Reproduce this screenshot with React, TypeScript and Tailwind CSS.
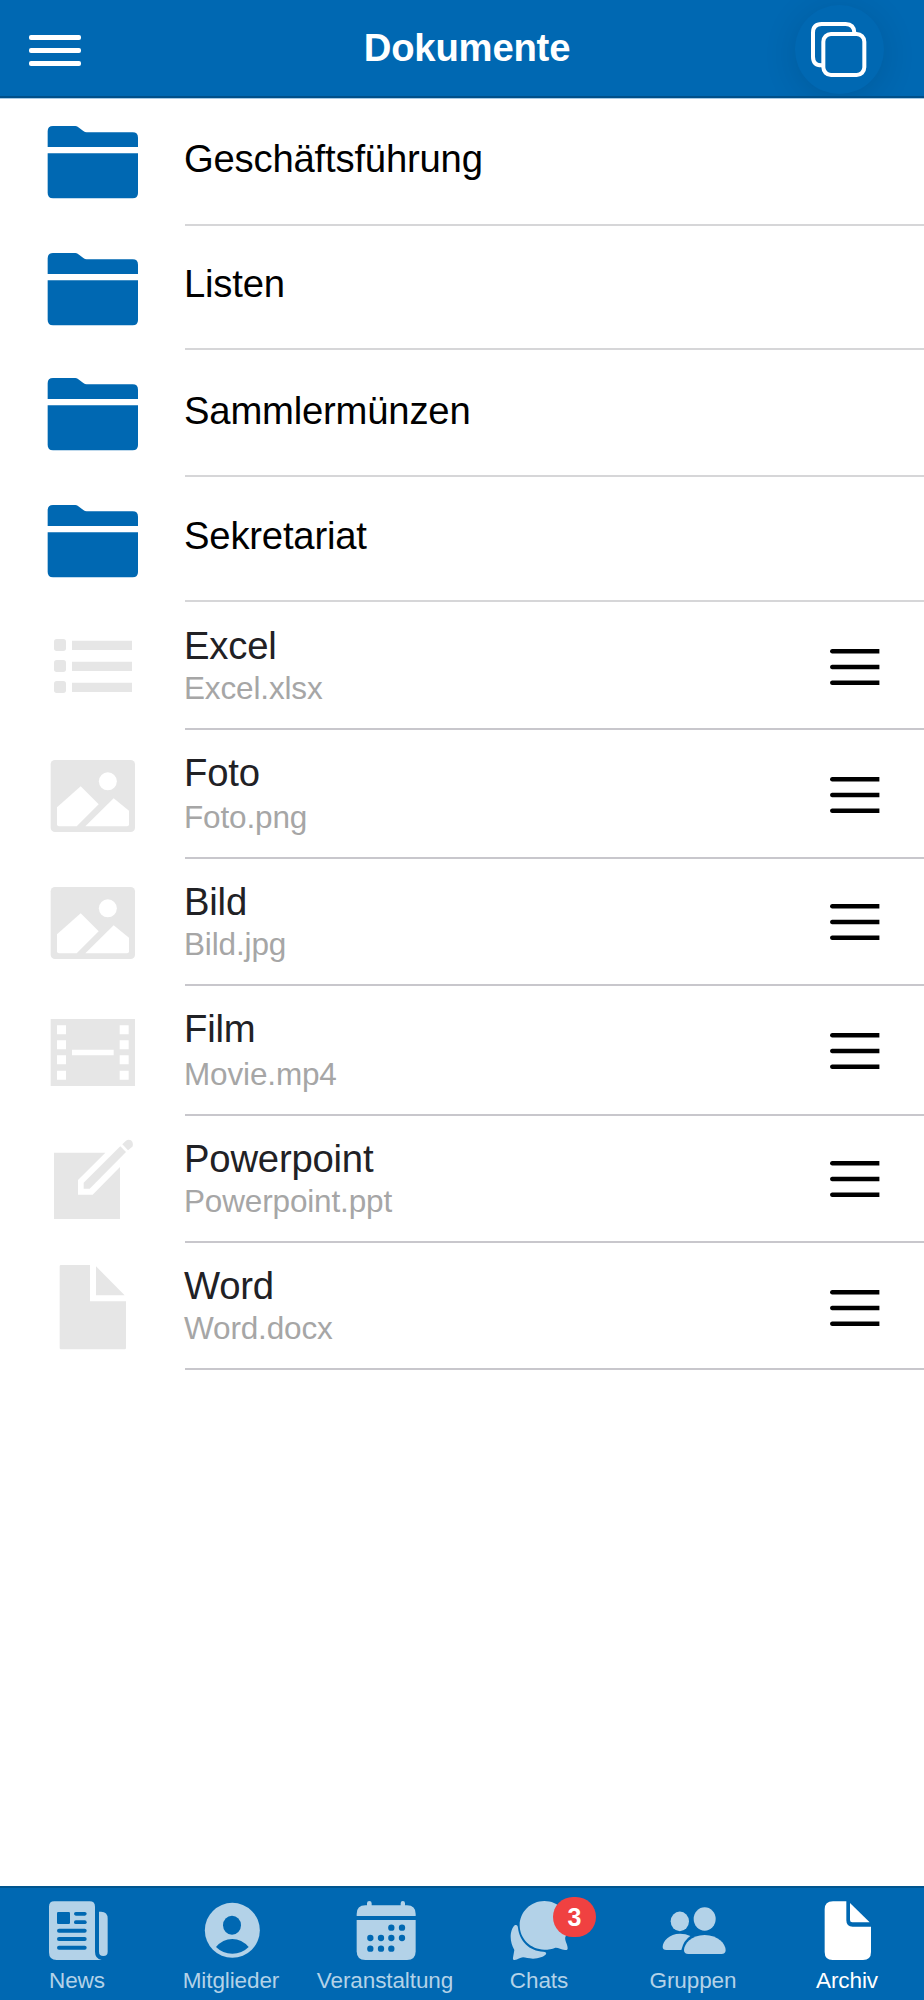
import type { ReactNode } from 'react';

type Folder = { name: string; row: string; icon: string; text: string };
type Doc = { name: string; file: string; row: string; icon: ReactNode; iconTop: string; text: string; gap: string; handle: string };

const FolderIcon = () => (
    <svg className="w-[91px] h-[73px] text-[#0068b2]" viewBox="141 377 273 219" fill="currentColor">
        <path d="M143 440v-47q0-16 16-16h67q4 0 7 2l17 13q5 4 10 4h138q16 0 16 16v28z" />
        <path d="M143 459h271v119q0 16-16 16H159q-16 0-16-16z" />
    </svg>
);

const ListIcon = () => (
    <svg className="w-[91px] h-[54px]" viewBox="141 117 273 162" fill="currentColor">
        <rect x="162" y="117" width="36" height="36" rx="8" />
        <rect x="162" y="180" width="36" height="36" rx="8" />
        <rect x="162" y="243" width="36" height="36" rx="8" />
        <path d="M216 122h180v28H216zM216 185h180v28H216zM216 248h180v28H216z" />
    </svg>
);

const ImageIcon = () => (
    <svg className="w-[91px] h-[73px]" viewBox="141 479 273 219" fill="currentColor">
        <rect x="152" y="479" width="253" height="216" rx="13" />
        <g fill="#fff">
            <circle cx="323.500" cy="543" r="27" />
            <path d="M171 621l71-63 54 54-66 66h-53q-6 0-6-6z" />
            <path d="M256 678l85-84 46 37v41q0 6-6 6z" />
        </g>
    </svg>
);

const FilmIcon = () => (
    <svg className="w-[91px] h-[67px]" viewBox="141 447 273 201" fill="currentColor">
        <path d="M152 447h253v201H152z" />
        <g fill="#fff">
            <path d="M171 466h27v27h-27zM171 511h27v27h-27zM171 556h27v27h-27zM171 602h27v27h-27z" />
            <path d="M359 466h27v27h-27zM359 511h27v27h-27zM359 556h27v27h-27zM359 602h27v27h-27z" />
            <path d="M216 539h125v17H216z" />
        </g>
    </svg>
);

const CreateIcon = () => (
    <svg className="w-[91px] h-[81px]" viewBox="141 57 273 243" fill="currentColor">
        <path d="M162 98h154l-82 82v44h44l82-83v156H162z" />
        <path d="M251 188l110-109 17 17-109 110h-18z" />
        <path d="M367 73l10-10q8-7 16-2 9 8 4 19l-13 11z" />
    </svg>
);

const DocumentIcon = () => (
    <svg className="w-[91px] h-[85px]" viewBox="141 434 273 255" fill="currentColor">
        <path d="M183 434h87v109h108v140q0 4-4 4H183q-4 0-4-4V438q0-4 4-4z" />
        <path d="M288 438l86 87h-86z" />
    </svg>
);

const HandleIcon = () => (
    <svg className="w-[50px] h-[36px] text-black" viewBox="0 0 50 36" fill="currentColor">
        <path d="M2 0h47.400v4.500H2q-2-.5-2-2.250T2 0z" />
        <path d="M2 15.700h47.400v4.500H2q-2-.5-2-2.250t2-2.250z" />
        <path d="M2 31.400h47.400v4.500H2q-2-.5-2-2.250t2-2.250z" />
    </svg>
);

const folders: Folder[] = [
    { name: 'Geschäftsführung', row: 'h-[128px]', icon: 'pt-[28px]', text: 'pt-[39px]' },
    { name: 'Listen', row: 'h-[124px]', icon: 'pt-[27px]', text: 'pt-[36px]' },
    { name: 'Sammlermünzen', row: 'h-[127px]', icon: 'pt-[28px]', text: 'pt-[39px]' },
    { name: 'Sekretariat', row: 'h-[125px]', icon: 'pt-[28px]', text: 'pt-[37px]' },
];

const docs: Doc[] = [
    { name: 'Excel', file: 'Excel.xlsx', row: 'h-[128px]', icon: <ListIcon />, iconTop: 'pt-[37px]', text: 'pt-[22px]', gap: 'mt-[2px]', handle: 'pt-[47px]' },
    { name: 'Foto', file: 'Foto.png', row: 'h-[129px]', icon: <ImageIcon />, iconTop: 'pt-[30px]', text: 'pt-[21px]', gap: 'mt-[4px]', handle: 'pt-[47px]' },
    { name: 'Bild', file: 'Bild.jpg', row: 'h-[127px]', icon: <ImageIcon />, iconTop: 'pt-[28px]', text: 'pt-[21px]', gap: 'mt-[2px]', handle: 'pt-[45px]' },
    { name: 'Film', file: 'Movie.mp4', row: 'h-[130px]', icon: <FilmIcon />, iconTop: 'pt-[33px]', text: 'pt-[21px]', gap: 'mt-[5px]', handle: 'pt-[47px]' },
    { name: 'Powerpoint', file: 'Powerpoint.ppt', row: 'h-[127px]', icon: <CreateIcon />, iconTop: 'pt-[23px]', text: 'pt-[21px]', gap: 'mt-[2px]', handle: 'pt-[45px]' },
    { name: 'Word', file: 'Word.docx', row: 'h-[127px]', icon: <DocumentIcon />, iconTop: 'pt-[22px]', text: 'pt-[21px]', gap: 'mt-[2px]', handle: 'pt-[47px]' },
];

const tabs = [
    {
        label: 'News',
        icon: (
            <svg className="w-[68px] h-[62px]" viewBox="129 87 204 186" fill="currentColor">
                <path d="M163 94h106q16 0 16 16v135q0 21 20 25H170q-23 0-23-23V110q0-16 16-16z" />
                <path d="M297 125h6q20 1 20 20v100q0 13-13 13t-13-13z" />
                <g fill="#0068b2">
                    <rect x="171" y="126" width="39" height="36" rx="4" />
                    <rect x="222" y="126" width="38" height="11" rx="5.500" />
                    <rect x="222" y="151" width="38" height="11" rx="5.500" />
                    <rect x="171" y="176" width="89" height="12" rx="6" />
                    <rect x="171" y="201" width="89" height="12" rx="6" />
                    <rect x="171" y="227" width="89" height="12" rx="6" />
                </g>
            </svg>
        ),
    },
    {
        label: 'Mitglieder',
        icon: (
            <svg className="w-[68px] h-[62px]" viewBox="591 87 204 186" fill="currentColor">
                <circle cx="697" cy="181" r="82.500" />
                <g fill="#0068b2">
                    <ellipse cx="696" cy="166" rx="27" ry="28.500" />
                    <path d="M648 231q20-24 49-24 28 0 49 24-20 20-49 20t-49-20z" />
                </g>
            </svg>
        ),
    },
    {
        label: 'Veranstaltung',
        icon: (
            <svg className="w-[68px] h-[62px]" viewBox="1053 87 204 186" fill="currentColor">
                <path d="M1070 138v-6q0-26 26-26h5v-6q0-7 7-7t7 7v6h87v-6q0-7 6.500-7t6.500 7v6h6q26 0 26 26v6z" />
                <path d="M1070 150h177v94q0 26-26 26h-125q-26 0-26-26z" />
                <g fill="#0068b2">
                    <circle cx="1174" cy="173" r="9.500" />
                    <circle cx="1206" cy="173" r="9.500" />
                    <circle cx="1111" cy="204" r="9.500" />
                    <circle cx="1143" cy="204" r="9.500" />
                    <circle cx="1174" cy="204" r="9.500" />
                    <circle cx="1206" cy="204" r="9.500" />
                    <circle cx="1111" cy="236" r="9.500" />
                    <circle cx="1143" cy="236" r="9.500" />
                    <circle cx="1174" cy="236" r="9.500" />
                </g>
            </svg>
        ),
    },
    {
        label: 'Chats',
        badge: 3,
        icon: (
            <svg className="w-[68px] h-[62px]" viewBox="129 87 204 186" fill="currentColor">
                <path d="M247 93c41 0 74 33 74 73 0 13-5 26-11 35-3 10 7 22 7 34 0 5-4 6-8 5-12-2-21-8-29-7-10 4-21 6-33 6-41 0-74-33-74-73s33-73 74-73z" />
                <path d="M158 166c6-3 9 0 10 7 4 40 34 70 76 72 7 0 10 3 8 8-6 7-22 13-39 13-14 0-22-4-30-4s-16 8-25 8c-4 0-6-3-5-7l4-23c-7-13-11-26-11-39s4-28 12-35z" />
            </svg>
        ),
    },
    {
        label: 'Gruppen',
        icon: (
            <svg className="w-[68px] h-[62px]" viewBox="591 87 204 186" fill="currentColor">
                <ellipse cx="653.500" cy="154" rx="27.500" ry="29.500" />
                <ellipse cx="728" cy="147" rx="33" ry="35" />
                <path d="M654 191q17 0 31 7-20 13-27 42h-45q-11 0-11-9c0-18 20-40 52-40z" />
                <path d="M728 195c40 0 63 27 63 45q0 12-13 12H679q-13 0-13-12c0-18 22-45 62-45z" />
            </svg>
        ),
    },
    {
        label: 'Archiv',
        active: true,
        icon: (
            <svg className="w-[68px] h-[62px]" viewBox="1053 87 204 186" fill="currentColor">
                <path d="M1113 94h40v57q0 19 19 19h55v76q0 24-24 24h-91q-24 0-24-24v-128q0-24 25-24z" />
                <path d="M1164 99l59 58h-52q-7 0-7-7z" />
            </svg>
        ),
    },
];

export default function App() {
    return (
        <div className="w-[924px] h-[2000px] flex flex-col bg-white overflow-hidden font-['Liberation_Sans',Arial,sans-serif]">
            {/* Header */}
            <header className="h-[98px] shrink-0 flex items-start justify-between bg-[#0068b2] border-b-2 border-[#00508a] text-white overflow-hidden shadow-[0_1px_0_#a6c9e3]">
                <button className="w-[140px] pl-[29px] pt-[35px] flex flex-col gap-[8px]">
                    <span className="w-[52px] h-[5px] rounded-[2px] bg-white" />
                    <span className="w-[52px] h-[5px] rounded-[2px] bg-white" />
                    <span className="w-[52px] h-[5px] rounded-[2px] bg-white" />
                </button>
                <h1 className="pt-[26px] pl-[10px] text-[38.25px] leading-[44px] tracking-[-0.2px] font-bold">Dokumente</h1>
                <div className="w-[140px] pt-[5px] pl-[11px]">
                    <button className="w-[89px] h-[89px] flex rounded-full bg-[#0068b2] shadow-[0_5px_34px_rgba(0,0,0,0.12)]">
                        <svg className="w-[89px] h-[89px]" viewBox="1000 14 267 267" fill="none" stroke="#fff" strokeWidth="12">
                            <rect x="1085" y="101" width="123" height="123" rx="23" />
                            <path d="M1178 99v-2q-1-26-26-26h-72q-26 0-26 26v72q0 26 26 26h2" />
                        </svg>
                    </button>
                </div>
            </header>

            {/* Folders and documents */}
            <main className="flex-1">
                {folders.map((f) => (
                    <div key={f.name} className={`flex ${f.row}`}>
                        <div className={`w-[185px] pl-[47px] ${f.icon}`}><FolderIcon /></div>
                        <div className={`flex-1 border-b-2 border-[#d6d6d8] ${f.text}`}>
                            <p className="-ml-px text-[38.25px] leading-[44px] tracking-[-0.2px] text-black">{f.name}</p>
                        </div>
                    </div>
                ))}
                {docs.map((d) => (
                    <div key={d.name} className={`flex ${d.row}`}>
                        <div className={`w-[185px] pl-[47px] text-[#e6e6e6] ${d.iconTop}`}>{d.icon}</div>
                        <div className="flex-1 flex justify-between border-b-2 border-[#c8c7cc]">
                            <div className={`-ml-px ${d.text}`}>
                                <p className="text-[38.25px] leading-[44px] tracking-[-0.2px] text-[#212125]">{d.name}</p>
                                <p className={`text-[31.5px] leading-[36px] tracking-[-0.15px] text-[#a6a6a6] ${d.gap}`}>{d.file}</p>
                            </div>
                            <div className={`w-[94px] ${d.handle}`}><HandleIcon /></div>
                        </div>
                    </div>
                ))}
            </main>

            {/* Tab bar */}
            <nav className="h-[114px] shrink-0 flex bg-[#0068b2] border-t-2 border-[#00558f]">
                {tabs.map((t) => (
                    <a key={t.label} className={`w-[154px] pt-[11px] flex flex-col items-center ${t.active ? 'text-white' : 'text-[#b3d2e8]'}`}>
                        <div className="relative">
                            {t.icon}
                            {t.badge && (
                                <span className="absolute left-[48px] -top-[2px] w-[43px] h-[40px] rounded-[20px] bg-[#f04141] text-white text-[25px] leading-[40px] font-bold text-center">
                                    {t.badge}
                                </span>
                            )}
                        </div>
                        <span className="mt-[7px] text-[22.5px] leading-[26px] tracking-[-0.1px]">{t.label}</span>
                    </a>
                ))}
            </nav>
        </div>
    );
}
